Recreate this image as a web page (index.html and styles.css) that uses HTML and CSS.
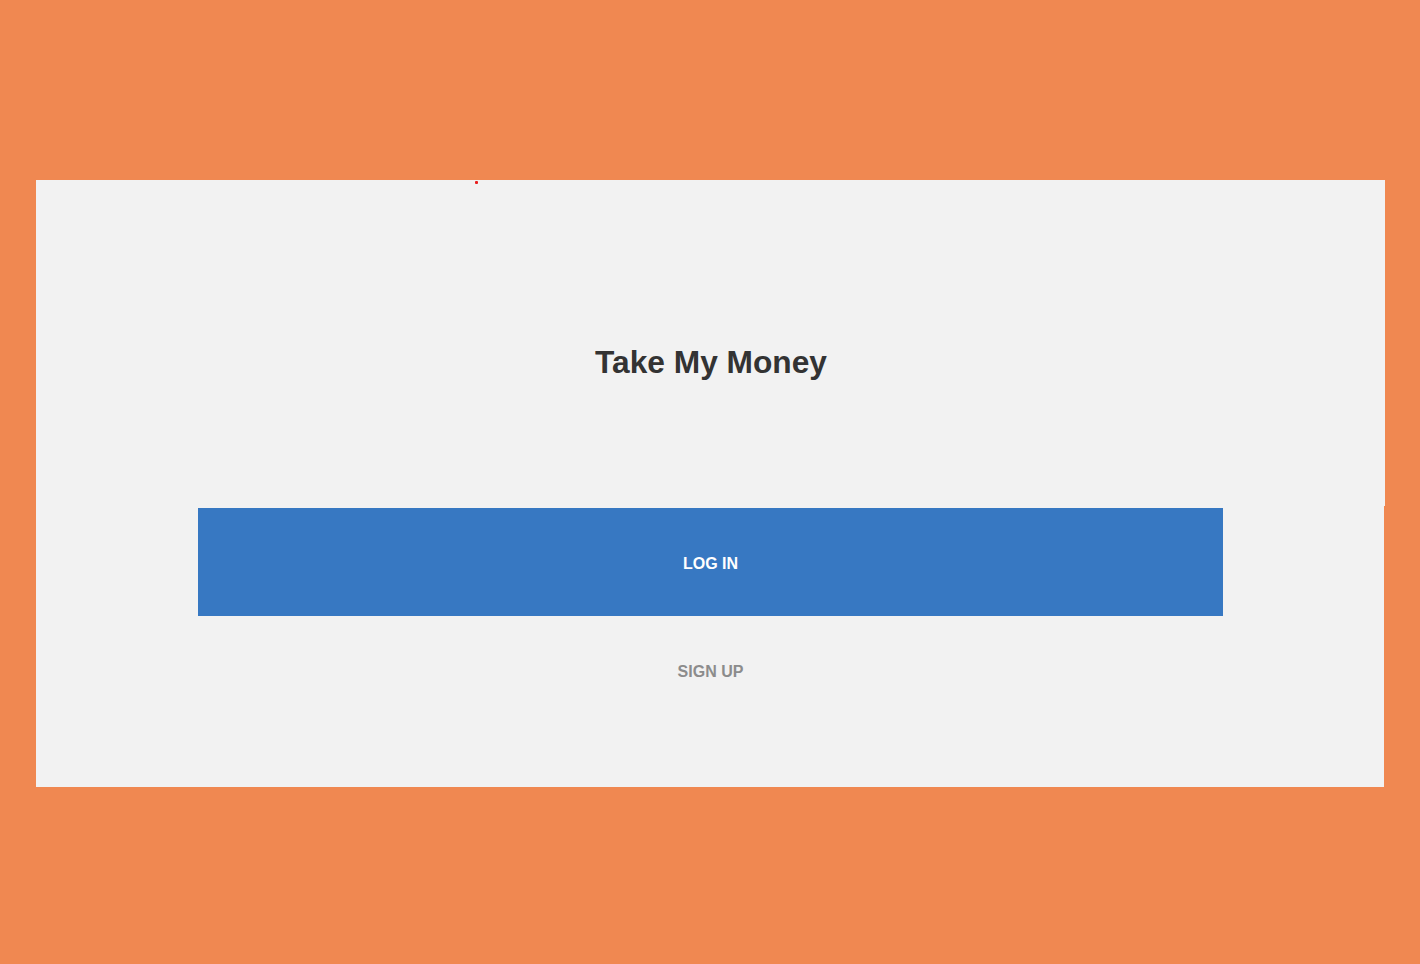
FILE: index.html
```html
<!DOCTYPE html>
<html lang="en">
<head>
<meta charset="utf-8">
<title>Take My Money</title>
<link rel="stylesheet" href="styles.css">
</head>
<body>
<main class="card">
  <span class="dot"></span>
  <section class="card-top">
    <h1 class="title">Take My Money</h1>
  </section>
  <section class="card-bottom">
    <button class="btn-login" type="button">LOG IN</button>
    <a class="link-signup" href="#">SIGN UP</a>
  </section>
</main>
</body>
</html>
```
FILE: styles.css
```css
html, body {
  margin: 0;
  padding: 0;
  background: #f08851;
  width: 1420px;
  height: 964px;
  overflow: hidden;
}
body {
  padding: 180px 0 0 36px;
  box-sizing: border-box;
  font-family: "Liberation Sans", Arial, sans-serif;
}
.card {
  position: relative;
  width: 1349px;
  display: flex;
  flex-direction: column;
}
.dot {
  position: absolute;
  left: 439px;
  top: 1px;
  width: 3px;
  height: 3px;
  border-radius: 1px;
  background: #e81e1e;
}
.card-top {
  background: #f2f2f2;
  width: 1349px;
  height: 326px;
  box-sizing: border-box;
  padding-top: 164px;
}
.title {
  margin: 0;
  text-align: center;
  font-size: 31.7px;
  line-height: 36px;
  font-weight: 700;
  color: #333333;
  padding-left: 1px;
}
.card-bottom {
  background: #f2f2f2;
  width: 1348px;
  height: 281px;
  box-sizing: border-box;
  padding-top: 2px;
  display: flex;
  flex-direction: column;
  align-items: center;
}
.btn-login {
  width: 1025px;
  height: 108px;
  margin-left: 1px;
  border: none;
  background: #3778c2;
  color: #ffffff;
  font-family: "Liberation Sans", Arial, sans-serif;
  font-weight: 700;
  font-size: 16px;
  padding: 4px 0 0 0;
  cursor: pointer;
}
.link-signup {
  margin-top: 47px;
  margin-left: 1px;
  font-size: 16px;
  line-height: 18px;
  font-weight: 700;
  color: #8c8c8c;
  text-decoration: none;
}
```
